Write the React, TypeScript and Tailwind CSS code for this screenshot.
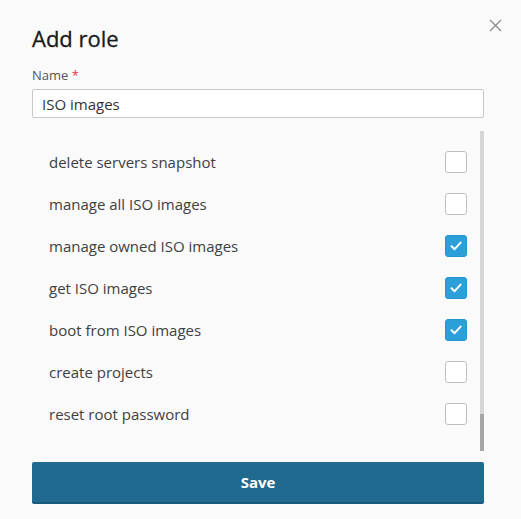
import React, {useState} from "react";

type Permission = {
  label: string;
  checked: boolean;
};

const initialPermissions: Permission[] = [
  {label: "delete servers snapshot", checked: false},
  {label: "manage all ISO images", checked: false},
  {label: "manage owned ISO images", checked: true},
  {label: "get ISO images", checked: true},
  {label: "boot from ISO images", checked: true},
  {label: "create projects", checked: false},
  {label: "reset root password", checked: false},
];

function CheckBox({checked, onClick}: {checked: boolean; onClick: () => void}) {
  if (checked) {
    return (
      <button
        onClick={onClick}
        className="w-[22px] h-[22px] rounded-[3px] bg-[#2a9fd8] border border-[#2396cf] flex items-center justify-center">
        <svg width="14" height="14" viewBox="0 0 14 14" fill="none">
          <path
            d="M2.5 7.3 L5.6 10.2 L11.6 3.6"
            stroke="white"
            strokeWidth="2"
            strokeLinecap="round"
            strokeLinejoin="round"
          />
        </svg>
      </button>
    );
  }
  return (
    <button
      onClick={onClick}
      className="w-[22px] h-[22px] rounded-[3px] bg-white border border-[#bdbdbd]"
    />
  );
}

export default function App() {
  const [name, setName] = useState("ISO images");
  const [perms, setPerms] = useState(initialPermissions);

  const toggle = (index: number) => {
    setPerms(perms.map((p, i) => (i == index ? {...p, checked: !p.checked} : p)));
  };

  return (
    <div
      className="w-[521px] h-[519px] bg-[#fafafa] relative pl-8 pr-[37px] pt-[24px] text-[#333]"
      style={{fontFamily: '"Open Sans", "Noto Sans", sans-serif'}}>
      <button className="absolute top-[19px] right-[19px] w-[13px] h-[13px] text-[#888]">
        <svg width="13" height="13" viewBox="0 0 13 13" fill="none">
          <path d="M1 1 L12 12 M12 1 L1 12" stroke="currentColor" strokeWidth="1.2" />
        </svg>
      </button>

      <h2 className="text-[22px] leading-[28px] font-medium text-[#1a1a1a] [-webkit-text-stroke:0.3px_#1a1a1a]">
        Add role
      </h2>

      <label className="block mt-[14px] text-[13px] leading-[18px] text-[#555]">
        Name <span className="text-[#e0354b]">*</span>
      </label>

      <input
        value={name}
        onChange={(e) => setName(e.target.value)}
        className="mt-[5px] w-full h-[29px] px-[9px] bg-white border border-[#c8c8c8] rounded-[2px] text-[15px] text-[#333] outline-none"
      />

      <div className="mt-[13px] h-[320px] flex">
        <div className="flex-1 overflow-hidden pt-[10px]">
          {perms.map((p, i) => (
            <div key={p.label} className="h-[42px] flex items-center justify-between pl-[17px] pr-[13px]">
              <span className="text-[15px] text-[#404040]">{p.label}</span>
              <CheckBox checked={p.checked} onClick={() => toggle(i)} />
            </div>
          ))}
        </div>
        <div className="w-[4px] h-full bg-[#d6d6d6] flex flex-col justify-end">
          <div className="h-[37px] bg-[#a6a6a6]" />
        </div>
      </div>

      <button className="mt-[11px] w-full h-[42px] bg-[#1f6a8e] border-b-2 border-[#185a7a] rounded-[2px] text-white text-[15px] font-bold">
        Save
      </button>
    </div>
  );
}
